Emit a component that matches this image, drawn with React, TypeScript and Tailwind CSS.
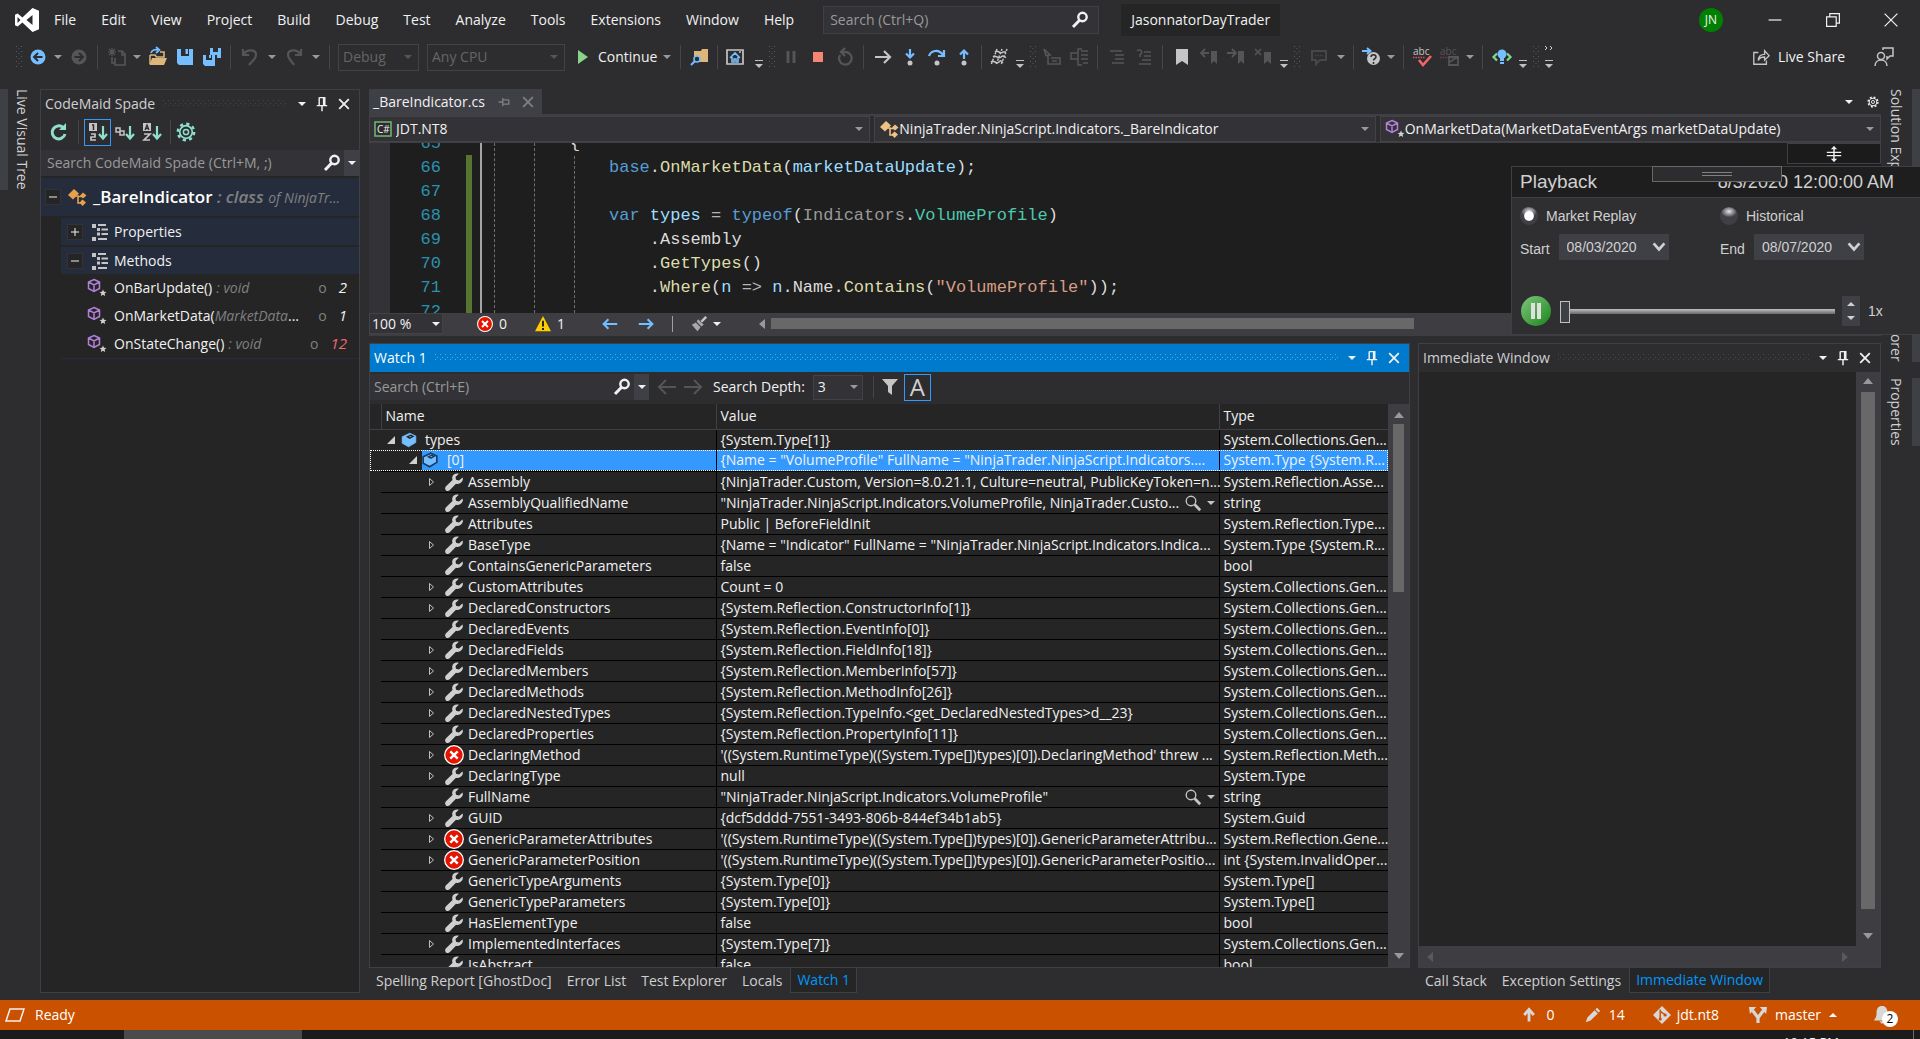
import type { ReactNode } from 'react'

// ---------------------------------------------------------------------------
// Icon primitives
// ---------------------------------------------------------------------------

interface IconProps {
  className?: string
  children?: ReactNode
}

function Icon({ className, children }: IconProps) {
  return (
    <svg viewBox="0 0 20 20" className={`shrink-0 overflow-visible ${className ?? 'size-5'}`} fill="none" aria-hidden="true">
      {children}
    </svg>
  )
}

function Caret({ className }: { className?: string }) {
  return (
    <svg viewBox="0 0 8 4" className={`h-1 w-2 shrink-0 ${className ?? 'text-[#999999]'}`} aria-hidden="true">
      <path d="M0 0h8L4 4z" fill="currentColor" />
    </svg>
  )
}

function SearchIcon({ className }: { className?: string }) {
  return (
    <Icon className={className ?? 'size-5 text-[#f1f1f1]'}>
      <circle cx="12.5" cy="7" r="4.2" stroke="currentColor" strokeWidth="2.4" />
      <path d="M9.5 10.2 3 17" stroke="currentColor" strokeWidth="3" />
    </Icon>
  )
}

function PinIcon() {
  return (
    <Icon className="h-4 w-4">
      <path d="M6.5 2h7v10M6.5 2v10M3.5 12h13M10 12v7M12 2v10" stroke="currentColor" strokeWidth="1.8" />
    </Icon>
  )
}

function CloseIcon() {
  return (
    <Icon className="h-4 w-4">
      <path d="m4 4 12 12M16 4 4 16" stroke="currentColor" strokeWidth="2.2" />
    </Icon>
  )
}

function ClassIcon({ color = '#e8a04c' }: { color?: string }) {
  return (
    <Icon className="size-5">
      <path d="m1 8 6-6 5 4.500-6 6z" fill={color} />
      <path d="M8 9h3v7h4M11 9.500h4" stroke={color} strokeWidth="1.600" />
      <path d="m16 5.500 3.500 3-3.500 3-3-3zM15.500 12.500l3.500 3-3.500 3.500-3-3.500z" fill={color} />
    </Icon>
  )
}

function MethodIcon() {
  return (
    <Icon className="size-5">
      <path d="M7 1.500 12.500 4v6.500L7 13.500 1.500 10.500V4zM1.500 4 7 6.800 12.500 4M7 6.800v6.700" stroke="#b180d7" strokeWidth="1.500" />
      <path d="m16 11.500 1 2.300 2.500.2-1.900 1.600.6 2.400-2.200-1.300-2.200 1.300.6-2.400-1.900-1.600 2.500-.2z" fill="#d0d0d0" />
    </Icon>
  )
}

function GroupIcon() {
  return (
    <Icon className="size-5">
      <path d="M2 2h4v4H2zM2 15h4v4H2zM7 6h3v3H7zM7 10.500h3v3H7z" fill="#c5c5c5" />
      <path d="M8 3h8M11.500 7.500H18M11.500 12H18M8 17h9" stroke="#c5c5c5" strokeWidth="1.800" />
    </Icon>
  )
}

function WrenchIcon() {
  return (
    <Icon className="size-5">
      <path
        d="M18.500 5.500 15 8.500 12 7.800 11.500 5 14.800 1.800C12 .8 8.500 2.500 8.200 5.500c-.1 1 .1 1.800.3 2.500L2 14.300C.8 15.700.900 17.500 2 18.400c1.200 1 2.800.8 3.900-.4L12 11.700c3.500 1 6.800-1.600 6.900-4.600z"
        fill="#d0d0d0"
      />
    </Icon>
  )
}

function ErrorIcon({ className }: { className?: string }) {
  return (
    <Icon className={className ?? 'size-5'}>
      <circle cx="10" cy="10" r="9.300" fill="#e51400" stroke="#ffffff" strokeWidth="1.300" />
      <path d="m6.300 6.300 7.400 7.400M13.700 6.300l-7.400 7.400" stroke="#ffffff" strokeWidth="2.400" />
    </Icon>
  )
}

function CubeIcon({ selected }: { selected?: boolean }) {
  return (
    <Icon className="size-4">
      <path
        d="M11 1.500 18.500 5v8L9.500 18.500 1.500 14V6z"
        fill="#75beff"
        stroke={selected ? '#1b3a5c' : '#75beff'}
        strokeWidth={selected ? 2 : 1}
      />
      <path d="m8 6 4-2 3 1.500-4 2.200z" stroke={selected ? '#1b3a5c' : '#252526'} strokeWidth="1.800" />
    </Icon>
  )
}

function GearIcon({ className }: { className?: string }) {
  return (
    <Icon className={className}>
      <circle cx="10" cy="10" r="6.300" stroke="currentColor" strokeWidth="1.700" />
      <circle cx="10" cy="10" r="2.600" stroke="currentColor" strokeWidth="1.500" />
      <circle cx="10" cy="10" r="8.200" stroke="currentColor" strokeWidth="2.400" strokeDasharray="3.200 3.240" />
    </Icon>
  )
}

/** Dotted drag area that fills the rest of a title bar. */
function DragDots({ id, color }: { id: string; color: string }) {
  return (
    <svg className="h-2 min-w-0 flex-1" aria-hidden="true">
      <pattern id={id} width="5" height="5" patternUnits="userSpaceOnUse">
        <rect width="1" height="1" fill={color} />
        <rect x="2" y="3" width="1" height="1" fill={color} />
      </pattern>
      <rect width="100%" height="100%" fill={`url(#${id})`} />
    </svg>
  )
}

// ---------------------------------------------------------------------------
// Menu bar
// ---------------------------------------------------------------------------

const MENUS = ['File', 'Edit', 'View', 'Project', 'Build', 'Debug', 'Test', 'Analyze', 'Tools', 'Extensions', 'Window', 'Help']

function MenuBar() {
  return (
    <header className="flex h-10 shrink-0 items-center">
      <svg viewBox="0 0 24 24" className="ml-[15px] size-6 shrink-0" aria-label="Visual Studio">
        <path
          d="M17.500 0 24 2.800v18.400L17.500 24 7.400 14.600 2.600 18.500 0 17.300V6.700l2.600-1.200 4.800 3.900zM17.500 7l-6 5 6 5zM2.500 9v6l3-3z"
          fill="#ffffff"
          fillRule="evenodd"
        />
      </svg>
      <nav className="ml-[15px] flex gap-[25px]">
        {MENUS.map((name) => (
          <button key={name} type="button" className="whitespace-nowrap">
            {name}
          </button>
        ))}
      </nav>
      <label className="ml-[29px] flex h-7 w-[276px] items-center border border-[#3f3f46] bg-[#333337] pr-2">
        <input
          aria-label="Search"
          placeholder="Search (Ctrl+Q)"
          className="min-w-0 flex-1 bg-transparent px-1.5 outline-none placeholder:text-[#999999]"
        />
        <SearchIcon />
      </label>
      <h1 className="ml-[22px] flex h-8 items-center bg-[#252526] px-2.5">JasonnatorDayTrader</h1>
      <div className="ml-auto flex items-center">
        <span className="mr-[23px] flex size-6 items-center justify-center rounded-full bg-[#008000] text-xs">JN</span>
        <button type="button" aria-label="Minimize" className="flex w-[58px] justify-center">
          <Icon className="size-4">
            <path d="M2 10h16" stroke="#f1f1f1" strokeWidth="1.500" />
          </Icon>
        </button>
        <button type="button" aria-label="Restore" className="flex w-[58px] justify-center">
          <Icon className="size-4">
            <path d="M2 6h12v12H2zM6 6V2h12v12h-4" stroke="#f1f1f1" strokeWidth="1.500" />
          </Icon>
        </button>
        <button type="button" aria-label="Close" className="flex w-[58px] justify-center">
          <Icon className="size-4">
            <path d="m2 2 16 16M18 2 2 18" stroke="#f1f1f1" strokeWidth="1.500" />
          </Icon>
        </button>
      </div>
    </header>
  )
}

// ---------------------------------------------------------------------------
// Toolbar
// ---------------------------------------------------------------------------

function Tool({ label, children }: { label: string; children: ReactNode }) {
  return (
    <button type="button" aria-label={label} className="flex w-[27px] shrink-0 items-center justify-center">
      <Icon className="size-5">{children}</Icon>
    </button>
  )
}

function Sep({ tight }: { tight?: boolean }) {
  return (
    <span className={`flex shrink-0 justify-center ${tight ? 'w-2' : 'w-[11px]'}`}>
      <span className="h-6 w-px bg-[#46464a]" />
    </span>
  )
}

function Grip() {
  return (
    <svg className="h-6 w-2.5 shrink-0" viewBox="0 0 10 24" aria-hidden="true">
      <path d="M2.500 1v23M7.500 1v23" stroke="#5a5a5e" strokeWidth="1" strokeDasharray="1 4" />
      <path d="M5 3v20" stroke="#5a5a5e" strokeWidth="1" strokeDasharray="1 4" />
    </svg>
  )
}

function DropCaret({ wide }: { wide?: boolean }) {
  return (
    <button type="button" aria-label="More options" className={`flex shrink-0 justify-center ${wide ? 'w-[17px]' : 'w-3.5'}`}>
      <Caret />
    </button>
  )
}

function Overflow({ chevrons }: { chevrons?: boolean }) {
  return (
    <button type="button" aria-label="Toolbar options" className="flex w-4 shrink-0 justify-center">
      <svg viewBox="0 0 10 24" className="h-6 w-2.5" aria-hidden="true">
        {chevrons && <path d="m1 1 2 2-2 2M6 1l2 2-2 2" stroke="#d0d0d0" fill="none" />}
        <path d="M1 15.500h8" stroke="#c0c0c0" strokeWidth="1" />
        <path d="M1 19h8l-4 4z" fill="#c0c0c0" />
      </svg>
    </button>
  )
}

function Combo({ label, value, className }: { label: string; value: string; className: string }) {
  return (
    <span className={`flex h-[27px] shrink-0 items-center border border-[#434346] pr-1.5 ${className}`}>
      <select aria-label={label} className="min-w-0 flex-1 appearance-none bg-transparent pl-1 text-[#656565] outline-none">
        <option>{value}</option>
      </select>
      <Caret className="text-[#555558]" />
    </span>
  )
}

const DIM = '#555558'
const LIGHT = '#c5c5c5'
const BLUE = '#75beff'

function Toolbar() {
  return (
    <div className="flex h-[34px] shrink-0 items-center pl-3.5">
      <Grip />
      <Tool label="Navigate backward">
        <circle cx="10" cy="10" r="7.500" fill={BLUE} />
        <path d="M14.500 10H6.500M10 6l-4 4 4 4" stroke="#2d2d30" strokeWidth="2" />
      </Tool>
      <DropCaret />
      <Tool label="Navigate forward">
        <circle cx="10" cy="10" r="7.500" fill={DIM} />
        <path d="M5.500 10h8M10 6l4 4-4 4" stroke="#2d2d30" strokeWidth="2" />
      </Tool>
      <Sep />
      <Tool label="New project">
        <path d="M5 1v8M1 5h8M2 2l6 6M8 2 2 8" stroke={DIM} strokeWidth="1.200" />
        <path d="M11 4h4l3 3v11H8v-7M15 4v4h3M5 10v6h3" stroke={DIM} strokeWidth="1.600" />
      </Tool>
      <DropCaret />
      <Tool label="Open file">
        <path d="M2 8h5l1.500 2H16v-5h-4" stroke="#dcb67a" strokeWidth="1.600" />
        <path d="M4 11h15l-3 7H1.500z" fill="#dcb67a" />
        <path d="M2 8v9" stroke="#dcb67a" strokeWidth="1.500" />
        <path d="M3 6c1-3 4-4 7-3M8 0l3.500 3L8 6" stroke={BLUE} strokeWidth="1.700" />
      </Tool>
      <Tool label="Save">
        <path d="M2 2h16v16H4l-2-2z" fill={BLUE} />
        <path d="M6 2h8v7H6z" fill="#2d2d30" />
        <path d="M10.500 2h2.500v5h-2.500z" fill={BLUE} />
      </Tool>
      <Tool label="Save all">
        <path d="M8 1h11v10h-4V8H8z" fill={BLUE} />
        <path d="M11 1h5v4h-5z" fill="#2d2d30" />
        <path d="M1 8h12v11H3l-2-2z" fill={BLUE} />
        <path d="M4 8h6v5H4z" fill="#2d2d30" />
        <path d="M7 8h2v3H7z" fill={BLUE} />
      </Tool>
      <Sep />
      <Tool label="Undo">
        <path d="M3 2v6h6M4 7c3-5 12-5 12 1 0 4-4 6-7 10" stroke={DIM} strokeWidth="2.200" />
      </Tool>
      <DropCaret wide />
      <Tool label="Redo">
        <path d="M17 2v6h-6M16 7C13 2 4 2 4 8c0 4 4 6 6 10" stroke={DIM} strokeWidth="2.200" />
      </Tool>
      <DropCaret wide />
      <Sep />
      <Combo label="Solution configuration" value="Debug" className="ml-[3px] w-[81px]" />
      <Combo label="Solution platform" value="Any CPU" className="ml-2 w-[138px]" />
      <button type="button" className="flex w-[110px] shrink-0 items-center pl-[13px]">
        <svg viewBox="0 0 10 14" className="mr-2.5 h-3.5 w-2.5 shrink-0" aria-hidden="true">
          <path d="M0 0v14l10-7z" fill="#8ad488" />
        </svg>
        Continue
        <Caret className="ml-1.5 text-[#999999]" />
      </button>
      <Sep />
      <Tool label="Find in files">
        <path d="M4 4h7l1-2h6v13H9" fill="#dcb67a" />
        <path d="M4 4v6l7 5V4z" fill="#dcb67a" />
        <circle cx="7" cy="12" r="3" fill="#2d2d30" stroke={BLUE} strokeWidth="1.600" />
        <path d="m5 14-4 4" stroke={BLUE} strokeWidth="2" />
      </Tool>
      <Sep tight />
      <Tool label="Start page">
        <path d="M2 3h16v14H2z" stroke={LIGHT} strokeWidth="1.700" />
        <path d="m5 11 5-5 5 5M7 10v5h2v-3h2v3h2v-5" stroke={BLUE} strokeWidth="1.600" />
        <path d="M14 5h2" stroke={LIGHT} strokeWidth="1.500" />
      </Tool>
      <span className="w-[3px] shrink-0" />
      <Overflow />
      <Grip />
      <Tool label="Break all">
        <path d="M5.500 4h3v12h-3zM11.500 4h3v12h-3z" fill={DIM} />
      </Tool>
      <Tool label="Stop debugging">
        <path d="M5 5h10v10H5z" fill="#f48771" />
      </Tool>
      <Tool label="Restart">
        <path d="M5 8a6.300 6.300 0 1 0 5-3H7M10 1 6 5l4 4" stroke={DIM} strokeWidth="2.300" />
      </Tool>
      <Sep />
      <Tool label="Show next statement">
        <path d="M2 10h15M11 4l6 6-6 6" stroke={LIGHT} strokeWidth="2.200" />
      </Tool>
      <Tool label="Step into">
        <path d="M10 2v8M6 6.500l4 4 4-4" stroke={BLUE} strokeWidth="2.200" />
        <circle cx="10" cy="16" r="2.500" fill={LIGHT} />
      </Tool>
      <Tool label="Step over">
        <path d="M2 9C4 3 12 2 16 8M17 3v6h-6" stroke={BLUE} strokeWidth="2.200" />
        <circle cx="10" cy="16" r="2.500" fill={LIGHT} />
      </Tool>
      <Tool label="Step out">
        <path d="M10 12V4M6 7.500l4-4 4 4" stroke={BLUE} strokeWidth="2.200" />
        <circle cx="10" cy="16" r="2.500" fill={LIGHT} />
      </Tool>
      <Sep tight />
      <Tool label="Show threads in source">
        <path d="m8 2-6 16M13 2 7 18M18 2l-6 16" stroke={LIGHT} strokeWidth="1.500" strokeDasharray="2 1.500" />
        <path d="M6 5c3-3 5 3 8 0h3M4 10c3-3 5 3 8 0s4 1 5 0M2 15c3-3 5 3 8 0s3 1 4 0" stroke={LIGHT} strokeWidth="1.500" />
      </Tool>
      <Overflow />
      <Grip />
      <Tool label="Display members">
        <path d="m2 2 6 6-4 .5zM6 9v8h12v-6H9M10 14h5" stroke={DIM} strokeWidth="1.600" />
      </Tool>
      <Tool label="Parameter info">
        <path d="M2 6h7v6H2zM13 2H9v16h4M12 4h7M12 8h7M12 12h7M14 16h5" stroke={DIM} strokeWidth="1.500" />
      </Tool>
      <Sep />
      <Tool label="Comment lines">
        <path d="M3 4h12M8 8h9M8 12h9M5 16h12" stroke={DIM} strokeWidth="1.600" />
      </Tool>
      <Tool label="Uncomment lines">
        <path d="M3 4c3-3 7 1 3 4v2M10 5h7M10 9h7M8 13h9M5 17h12" stroke={DIM} strokeWidth="1.600" />
      </Tool>
      <Sep />
      <Tool label="Toggle bookmark">
        <path d="M4 2h12v16l-6-4-6 4z" fill={LIGHT} />
      </Tool>
      <Tool label="Previous bookmark">
        <path d="M12 4h6v13l-3-3-3 3z" fill={DIM} />
        <path d="M10 6H3M6 2 2 6l4 4" stroke={DIM} strokeWidth="1.800" />
      </Tool>
      <Tool label="Next bookmark">
        <path d="M12 4h6v13l-3-3-3 3z" fill={DIM} />
        <path d="M1 6h8M6 2l4 4-4 4" stroke={DIM} strokeWidth="1.800" />
      </Tool>
      <Tool label="Clear bookmarks">
        <path d="M11 5h7v12l-3.500-3-3.500 3z" fill={DIM} />
        <path d="m2 2 6 6M8 2 2 8" stroke={DIM} strokeWidth="1.600" />
      </Tool>
      <Overflow />
      <Grip />
      <span className="w-[3px] shrink-0" />
      <Tool label="Feedback comment">
        <path d="M3 4h14v9h-6l-4 4v-4H3z" stroke="#47474a" strokeWidth="2" />
        <path d="M6 8.500h8" stroke="#47474a" strokeWidth="1.500" strokeDasharray="1.500 1" />
      </Tool>
      <DropCaret wide />
      <Sep tight />
      <Tool label="Help document">
        <path d="M1 4h8M6 1l3.500 3L6 7" stroke={BLUE} strokeWidth="2" />
        <circle cx="12.500" cy="11.500" r="6.500" fill={LIGHT} />
        <path d="M10 10c0-3 5-3 5 0 0 2-2.500 1.500-2.500 3.500M12.500 15v2" stroke="#2d2d30" strokeWidth="1.500" />
      </Tool>
      <DropCaret />
      <Sep />
      <Tool label="Spell check">
        <text x="0" y="8" fontSize="10" fill={LIGHT}>
          abc
        </text>
        <path d="M0 10.500h12" stroke="#e0525a" strokeWidth="1.500" strokeDasharray="1.500 1" />
        <path d="m6 13 4 5 8-9" stroke="#f0666a" strokeWidth="2.600" />
      </Tool>
      <Tool label="Spell check options">
        <text x="0" y="8" fontSize="10" fill={DIM}>
          abc
        </text>
        <path d="M0 10.500h12" stroke="#6d4044" strokeWidth="1.500" strokeDasharray="1.500 1" />
        <path d="M9 10h9v8H9zM10 15l7-5" stroke={DIM} strokeWidth="1.800" />
      </Tool>
      <DropCaret />
      <Sep />
      <Tool label="Code suggestions">
        <path d="M5 6.500 1.500 10 5 13.500M15 6.500l3.500 3.500-3.500 3.500" stroke="#7fd88f" strokeWidth="2.200" />
        <circle cx="10" cy="7" r="4.500" fill={BLUE} />
        <path d="M8 10h4v4H8zM8 15h4v2H8z" fill={BLUE} />
      </Tool>
      <Overflow />
      <Grip />
      <Overflow chevrons />
      <button type="button" className="mr-[29px] ml-auto flex shrink-0 items-center gap-2">
        <Icon className="size-[18px]">
          <path d="M7 5H2v13h14v-4M7 14c0-5 3-7 7-7V3l5 5.500-5 5V10c-4 0-6 1-7 4z" stroke={LIGHT} strokeWidth="1.500" />
        </Icon>
        Live Share
      </button>
      <button type="button" aria-label="Send feedback" className="mr-[26px] shrink-0">
        <Icon className="size-5">
          <circle cx="7" cy="9" r="3.500" stroke={LIGHT} strokeWidth="1.500" />
          <path d="M1 19c0-8 12-8 12 0M9 3V1h10v8h-3l-3 3V9" stroke={LIGHT} strokeWidth="1.500" />
        </Icon>
      </button>
    </div>
  )
}

// ---------------------------------------------------------------------------
// Tool window title bar and bottom tabs
// ---------------------------------------------------------------------------

function TitleBar({ id, title, active }: { id: string; title: string; active?: boolean }) {
  return (
    <div
      className={`flex h-7 shrink-0 items-center gap-2 pr-[7px] pl-1 ${active ? 'bg-[#007acc] text-white' : 'text-[#d0d0d0]'}`}
    >
      <h2 className="whitespace-nowrap">{title}</h2>
      <DragDots id={id} color={active ? '#59a8de' : '#46464a'} />
      <div className="flex items-center gap-1.5 text-[#f1f1f1]">
        <button type="button" aria-label="Window position" className="px-0.5">
          <Caret className="text-[#f1f1f1]" />
        </button>
        <button type="button" aria-label="Auto hide">
          <PinIcon />
        </button>
        <button type="button" aria-label="Close">
          <CloseIcon />
        </button>
      </div>
    </div>
  )
}

function BottomTabs({ tabs, current }: { tabs: string[]; current: string }) {
  return (
    <div className="flex h-[25px] shrink-0 gap-px text-[#d0d0d0]">
      {tabs.map((tab) => (
        <button
          key={tab}
          type="button"
          className={`px-1.5 whitespace-nowrap ${
            tab === current ? 'border border-t-0 border-[#3f3f46] bg-[#252526] text-[#0097fb]' : 'border border-transparent'
          }`}
        >
          {tab}
        </button>
      ))}
    </div>
  )
}

function ScrollArrow({ dir, className }: { dir: 'up' | 'down' | 'left' | 'right'; className?: string }) {
  const paths = { up: 'M0 8h10L5 2z', down: 'M0 2h10L5 8z', left: 'M8 0v10L2 5z', right: 'M2 0v10l6-5z' }
  return (
    <svg viewBox="0 0 10 10" className={`size-2.5 shrink-0 ${className ?? 'text-[#999999]'}`} aria-hidden="true">
      <path d={paths[dir]} fill="currentColor" />
    </svg>
  )
}

// ---------------------------------------------------------------------------
// CodeMaid Spade
// ---------------------------------------------------------------------------

function TreeToggle({ open }: { open: boolean }) {
  return (
    <button
      type="button"
      aria-label={open ? 'Collapse' : 'Expand'}
      className="flex size-4 shrink-0 items-center justify-center border border-[#333337] bg-[#252526]"
    >
      <Icon className="size-2">
        <path d={open ? 'M0 10h20' : 'M0 10h20M10 0v20'} stroke="#f1f1f1" strokeWidth="2.500" />
      </Icon>
    </button>
  )
}

const METHODS = [
  { name: 'OnBarUpdate()', args: '', type: ': void', score: 2 },
  { name: 'OnMarketData(', args: 'MarketData', type: '', score: 1 },
  { name: 'OnStateChange()', args: '', type: ': void', score: 12 },
]

function SpadePanel() {
  return (
    <section className="flex w-80 shrink-0 flex-col border border-[#3f3f46] bg-[#252526]">
      <div className="bg-[#2d2d30]">
        <TitleBar id="spade-dots" title="CodeMaid Spade" />
        <div className="flex h-8 items-center pb-1 pl-1 text-[#8ee0cc]">
          <button type="button" aria-label="Refresh" className="flex w-7 justify-center">
            <Icon className="size-5">
              <path d="M16 12a6.500 6.500 0 1 1-2-6.500" stroke="currentColor" strokeWidth="3" />
              <path d="M17 1v7h-7z" fill="currentColor" />
            </Icon>
          </button>
          <Sep />
          <button type="button" aria-label="Sort by file order" className="flex size-[27px] items-center justify-center border border-[#3399ff]">
            <Icon className="size-5">
              <path d="M1 1h8v8H1z" fill={LIGHT} />
              <path d="M4 3h1.500v5" stroke="#2d2d30" strokeWidth="1.500" />
              <path d="M3 12h4v3H3v3h5" stroke={LIGHT} strokeWidth="1.700" />
              <path d="M15 4v12M11 12l4 4.500 4-4.500" stroke="currentColor" strokeWidth="2.200" />
            </Icon>
          </button>
          <button type="button" aria-label="Sort by type" className="flex w-[27px] justify-center">
            <Icon className="size-5">
              <path d="M1 6h4v4H1zM5 9h4v4H5z" stroke={LIGHT} strokeWidth="1.500" />
              <path d="M15 4v12M11 12l4 4.500 4-4.500" stroke="currentColor" strokeWidth="2.200" />
            </Icon>
          </button>
          <button type="button" aria-label="Sort by name" className="flex w-[27px] justify-center">
            <Icon className="size-5">
              <path d="M1 1h8v8H1z" fill={LIGHT} />
              <path d="m3 8 2-5 2 5M3.500 6.500h3" stroke="#2d2d30" strokeWidth="1.300" />
              <path d="M2 12h6l-6 6h6" stroke={LIGHT} strokeWidth="1.700" />
              <path d="M15 4v12M11 12l4 4.500 4-4.500" stroke="currentColor" strokeWidth="2.200" />
            </Icon>
          </button>
          <Sep />
          <button type="button" aria-label="Options">
            <GearIcon className="size-5" />
          </button>
        </div>
      </div>
      <label className="flex h-[26px] shrink-0 items-center bg-[#333337]">
        <input
          aria-label="Search CodeMaid Spade"
          placeholder="Search CodeMaid Spade (Ctrl+M, ;)"
          className="min-w-0 flex-1 bg-transparent pl-1.5 outline-none placeholder:text-[#999999]"
        />
        <SearchIcon />
        <span className="ml-0.5 flex h-full w-[15px] items-center justify-center bg-[#3f3f46]">
          <Caret className="text-[#f1f1f1]" />
        </span>
      </label>

      {/* Class node and its groups */}
      <div className="mt-0.5 flex h-[38px] items-center bg-[#252d3d] pl-1">
        <TreeToggle open />
        <span className="ml-1.5">
          <ClassIcon />
        </span>
        <p className="ml-1.5 whitespace-nowrap text-[#808080]">
          <b className="text-[17px] font-semibold text-white">_BareIndicator</b>
          <b className="text-[17px] font-semibold italic"> : class </b>
          <i>of NinjaTr...</i>
        </p>
      </div>
      {['Properties', 'Methods'].map((group) => (
        <div key={group} className="mt-0.5 ml-5 flex h-[27px] items-center bg-[#252d3d] pl-1.5">
          <TreeToggle open={group === 'Methods'} />
          <span className="mr-1 ml-[7px]">
            <GroupIcon />
          </span>
          {group}
        </div>
      ))}
      <ul className="ml-5 border-b border-[#252d3d]">
        {METHODS.map(({ name, args, type, score }) => (
          <li key={name} className="flex h-[28px] items-center pr-3 pl-[26px]">
            <MethodIcon />
            <span className="ml-[7px]">{name}</span>
            {args && (
              <span>
                <i className="text-[#808080]">{args}</i>...
              </span>
            )}
            <i className="ml-1 text-[#808080]">{type}</i>
            <span className="ml-auto text-[#808080]">o</span>
            <i className={`ml-3 text-[15px] ${score > 10 ? 'text-[#f06a6a]' : 'text-[#f1f1f1]'}`}>{score}</i>
          </li>
        ))}
      </ul>
    </section>
  )
}

// ---------------------------------------------------------------------------
// Code editor
// ---------------------------------------------------------------------------

const LINE_NUMBERS = [65, 66, 67, 68, 69, 70, 71, 72]

function NavSelect({ label, value, icon }: { label: string; value: string; icon: ReactNode }) {
  return (
    <span className="flex h-[26px] min-w-0 flex-1 items-center border border-[#434346] bg-[#333337] pr-1.5 pl-1">
      {icon}
      <select aria-label={label} className="min-w-0 flex-1 appearance-none bg-transparent outline-none">
        <option>{value}</option>
      </select>
      <Caret />
    </span>
  )
}

function CodeArea() {
  return (
    <div className="flex h-[170px] overflow-hidden bg-[#1e1e1e] font-['Liberation_Mono',monospace] text-[17px]/6 text-[#dcdcdc]">
      <div className="w-[21px] shrink-0 bg-[#333337]" />
      <div className="-mt-[11px] w-[76px] shrink-0 pr-[25px] text-right text-[#2b91af]">
        {LINE_NUMBERS.map((n) => (
          <div key={n}>{n}</div>
        ))}
      </div>
      <div className="mt-3 w-1.5 shrink-0 bg-[#577430]" />
      <div className="ml-2 w-0.5 shrink-0 bg-[#a5a5a5]" />
      <div className="ml-3 w-10 shrink-0 border-l border-dashed border-[#707070]" />
      <div className="w-9 shrink-0 border-l border-dashed border-[#707070]" />
      <div className="-mt-[11px] flex w-[39px] shrink-0 flex-col">
        <span>{'{'}</span>
        <span className="ml-1 flex-1 border-l border-dashed border-[#707070]" />
      </div>
      <pre className="-mt-[11px] min-w-0 font-[inherit]">
        {'\n'}
        <span className="text-[#569cd6]">base</span>.<span className="text-[#dcdcaa]">OnMarketData</span>(
        <span className="text-[#9cdcfe]">marketDataUpdate</span>);{'\n\n'}
        <span className="text-[#569cd6]">var</span> <span className="text-[#9cdcfe]">types</span>
        <span className="text-[#b4b4b4]"> = </span>
        <span className="text-[#569cd6]">typeof</span>(<span className="text-[#999999]">Indicators</span>.
        <span className="text-[#4ec9b0]">VolumeProfile</span>){'\n    '}.Assembly{'\n    '}.
        <span className="text-[#dcdcaa]">GetTypes</span>(){'\n    '}.<span className="text-[#dcdcaa]">Where</span>(
        <span className="text-[#9cdcfe]">n</span>
        <span className="text-[#b4b4b4]">{' => '}</span>
        <span className="text-[#9cdcfe]">n</span>.Name.<span className="text-[#dcdcaa]">Contains</span>(
        <span className="text-[#d69d85]">"VolumeProfile"</span>));
      </pre>
      {/* Split handle */}
      <button
        type="button"
        aria-label="Split editor"
        className="ml-auto flex h-[21px] w-[94px] shrink-0 items-center justify-center border border-[#3f3f46] bg-[#1b1b1c]"
      >
        <Icon className="size-4">
          <path d="M1 8h18M1 12h18M10 1v18" stroke="#f1f1f1" strokeWidth="1.800" />
          <path d="m6 4 4-4 4 4zM6 16l4 4 4-4z" fill="#f1f1f1" />
        </Icon>
      </button>
    </div>
  )
}

function Editor() {
  return (
    <section className="flex shrink-0 flex-col">
      <div className="flex h-[25px] items-center">
        <div className="flex h-full w-[173px] items-center bg-[#3f3f46] pl-1">
          _BareIndicator.cs
          <button type="button" aria-label="Pin tab" className="ml-auto rotate-90 text-[#808080]">
            <Icon className="size-3">
              <path d="M6.500 2h7v10M6.500 2v10M3.500 12h13M10 12v7" stroke="currentColor" strokeWidth="2.200" />
            </Icon>
          </button>
          <button type="button" aria-label="Close tab" className="mr-1.5 ml-2.5 text-[#808080]">
            <CloseIcon />
          </button>
        </div>
        <button type="button" aria-label="Active files" className="mr-3.5 ml-auto">
          <Caret className="text-[#f1f1f1]" />
        </button>
        <button type="button" aria-label="Tab options" className="mr-0.5">
          <GearIcon className="size-3" />
        </button>
      </div>
      <div className="flex gap-1 border-t-2 border-b border-[#3f3f46]">
        <NavSelect
          label="Project"
          value="JDT.NT8"
          icon={
            <svg viewBox="0 0 18 16" className="mr-1 h-4 w-[18px] shrink-0" aria-hidden="true">
              <path d="M1 1h16v14H1z" fill="#2d2d30" stroke="#73b873" strokeWidth="1.500" />
              <text x="3" y="12" fontSize="10" fill="#f1f1f1">
                C#
              </text>
            </svg>
          }
        />
        <NavSelect label="Type" value="NinjaTrader.NinjaScript.Indicators._BareIndicator" icon={<ClassIcon color="#efc184" />} />
        <NavSelect label="Member" value="OnMarketData(MarketDataEventArgs marketDataUpdate)" icon={<MethodIcon />} />
      </div>
      <CodeArea />
      <div className="flex h-[23px] items-center bg-[#3e3e42] pb-0.5">
        <span className="flex h-[21px] w-[74px] shrink-0 items-center border border-[#434346] bg-[#333337] pr-0.5">
          <select aria-label="Zoom" className="min-w-0 flex-1 appearance-none bg-transparent pl-0.5 outline-none">
            <option>100 %</option>
          </select>
          <Caret className="text-[#f1f1f1]" />
        </span>
        <button type="button" className="ml-[34px] flex items-center gap-1.5">
          <ErrorIcon className="size-4" />0
        </button>
        <button type="button" className="ml-7 flex items-center gap-1.5">
          <Icon className="size-4">
            <path d="M10 0 20 19H0z" fill="#ffcc00" />
            <path d="M10 6v7M10 15v2.500" stroke="#1e1e1e" strokeWidth="2.400" />
          </Icon>
          1
        </button>
        <button type="button" aria-label="Previous issue" className="ml-[37px]">
          <Icon className="size-4">
            <path d="M19 10H2M8 4l-6 6 6 6" stroke={BLUE} strokeWidth="2.500" />
          </Icon>
        </button>
        <button type="button" aria-label="Next issue" className="ml-5">
          <Icon className="size-4">
            <path d="M1 10h17M12 4l6 6-6 6" stroke={BLUE} strokeWidth="2.500" />
          </Icon>
        </button>
        <span className="mx-[18px] h-4 w-px bg-[#a0a0a0]" />
        <button type="button" aria-label="Code cleanup" className="flex items-center gap-1.5">
          <Icon className="size-4">
            <path d="m19 1-6 6" stroke={LIGHT} strokeWidth="3" />
            <path d="m9 4 7 7-3 2-6-6zM6 8l6 6-4 5-7-8z" fill="#a8a8a8" />
          </Icon>
          <Caret className="text-[#f1f1f1]" />
        </button>
        <ScrollArrow dir="left" className="ml-9 text-[#999999]" />
        <div className="ml-1 flex flex-1 items-center pr-[2px]">
          <div className="h-[11px] w-[58%] bg-[#686868]" />
        </div>
      </div>
    </section>
  )
}

// ---------------------------------------------------------------------------
// Watch window
// ---------------------------------------------------------------------------

interface WatchRow {
  name: string
  value: string
  type: string
  expandable?: boolean
  error?: boolean
  text?: boolean
}

const GEN = 'System.Collections.Gen...'

const ROWS: WatchRow[] = [
  { name: 'Assembly', value: '{NinjaTrader.Custom, Version=8.0.21.1, Culture=neutral, PublicKeyToken=n...', type: 'System.Reflection.Asse...', expandable: true },
  { name: 'AssemblyQualifiedName', value: '"NinjaTrader.NinjaScript.Indicators.VolumeProfile, NinjaTrader.Custo...', type: 'string', text: true },
  { name: 'Attributes', value: 'Public | BeforeFieldInit', type: 'System.Reflection.Type...' },
  { name: 'BaseType', value: '{Name = "Indicator" FullName = "NinjaTrader.NinjaScript.Indicators.Indica...', type: 'System.Type {System.R...', expandable: true },
  { name: 'ContainsGenericParameters', value: 'false', type: 'bool' },
  { name: 'CustomAttributes', value: 'Count = 0', type: GEN, expandable: true },
  { name: 'DeclaredConstructors', value: '{System.Reflection.ConstructorInfo[1]}', type: GEN, expandable: true },
  { name: 'DeclaredEvents', value: '{System.Reflection.EventInfo[0]}', type: GEN },
  { name: 'DeclaredFields', value: '{System.Reflection.FieldInfo[18]}', type: GEN, expandable: true },
  { name: 'DeclaredMembers', value: '{System.Reflection.MemberInfo[57]}', type: GEN, expandable: true },
  { name: 'DeclaredMethods', value: '{System.Reflection.MethodInfo[26]}', type: GEN, expandable: true },
  { name: 'DeclaredNestedTypes', value: '{System.Reflection.TypeInfo.<get_DeclaredNestedTypes>d__23}', type: GEN, expandable: true },
  { name: 'DeclaredProperties', value: '{System.Reflection.PropertyInfo[11]}', type: GEN, expandable: true },
  { name: 'DeclaringMethod', value: "'((System.RuntimeType)((System.Type[])types)[0]).DeclaringMethod' threw ...", type: 'System.Reflection.Meth...', expandable: true, error: true },
  { name: 'DeclaringType', value: 'null', type: 'System.Type', expandable: true },
  { name: 'FullName', value: '"NinjaTrader.NinjaScript.Indicators.VolumeProfile"', type: 'string', text: true },
  { name: 'GUID', value: '{dcf5dddd-7551-3493-806b-844ef34b1ab5}', type: 'System.Guid', expandable: true },
  { name: 'GenericParameterAttributes', value: "'((System.RuntimeType)((System.Type[])types)[0]).GenericParameterAttribu...", type: 'System.Reflection.Gene...', expandable: true, error: true },
  { name: 'GenericParameterPosition', value: "'((System.RuntimeType)((System.Type[])types)[0]).GenericParameterPositio...", type: 'int {System.InvalidOper...', expandable: true, error: true },
  { name: 'GenericTypeArguments', value: '{System.Type[0]}', type: 'System.Type[]' },
  { name: 'GenericTypeParameters', value: '{System.Type[0]}', type: 'System.Type[]' },
  { name: 'HasElementType', value: 'false', type: 'bool' },
  { name: 'ImplementedInterfaces', value: '{System.Type[7]}', type: GEN, expandable: true },
  { name: 'IsAbstract', value: 'false', type: 'bool' },
]

function Expander({ open, className }: { open?: boolean; className: string }) {
  return (
    <button type="button" aria-label={open ? 'Collapse' : 'Expand'} className={className}>
      <svg viewBox="0 0 8 10" className="h-2.5 w-2" fill="none" aria-hidden="true">
        {open ? <path d="M8 1v8H0z" fill="#d0d0d0" /> : <path d="M1.500 1.500v7L5.500 5z" stroke="#c0c0c0" />}
      </svg>
    </button>
  )
}

function WatchTable() {
  return (
    <table className="w-full table-fixed border-collapse whitespace-nowrap">
      <colgroup>
        <col className="w-[11px]" />
        <col className="w-[335px]" />
        <col />
        <col className="w-[169px]" />
      </colgroup>
      <thead>
        <tr className="h-[25px] border-b border-[#3f3f46] text-left">
          <th className="border-r border-[#3f3f46]" />
          <th className="border-r border-[#3f3f46] pl-1 font-normal">Name</th>
          <th className="border-r border-[#3f3f46] pl-1 font-normal">Value</th>
          <th className="pl-1 font-normal">Type</th>
        </tr>
      </thead>
      <tbody>
        <tr className="h-[21px]">
          <td />
          <td className="border-r border-black p-0">
            <div className="flex h-5 items-center">
              <Expander open className="ml-1.5" />
              <span className="mr-2 ml-1.5">
                <CubeIcon />
              </span>
              types
            </div>
          </td>
          <td className="border-r border-black py-0 pr-0 pl-1">{'{System.Type[1]}'}</td>
          <td className="py-0 pr-0 pl-1">{GEN}</td>
        </tr>
        <tr className="h-[21px] outline outline-1 -outline-offset-1 outline-dotted outline-white">
          <td />
          <td className="border-r border-black p-0">
            <div className="flex h-5 items-center">
              <Expander open className="ml-7" />
              <div className="ml-[5px] flex h-full flex-1 items-center gap-[9px] bg-[#3399ff]">
                <CubeIcon selected />
                [0]
              </div>
            </div>
          </td>
          <td className="border-r border-black bg-[#3399ff] py-0 pr-0 pl-1">
            {'{Name = "VolumeProfile" FullName = "NinjaTrader.NinjaScript.Indicators....'}
          </td>
          <td className="bg-[#3399ff] py-0 pr-0 pl-1">{'System.Type {System.R...'}</td>
        </tr>
        {ROWS.map(({ name, value, type, expandable, error, text }) => (
          <tr key={name} className="h-[21px]">
            <td />
            <td className="border-t border-r border-black p-0">
              <div className="flex h-5 items-center pl-[47px]">
                <span className="w-4">{expandable && <Expander className="block" />}</span>
                {error ? <ErrorIcon /> : <WrenchIcon />}
                <span className="ml-1">{name}</span>
              </div>
            </td>
            <td className="border-t border-r border-black py-0 pr-0 pl-1">
              <div className="flex h-5 items-center">
                <span className="min-w-0 flex-1">{value}</span>
                {text && (
                  <button type="button" aria-label="Text visualizer" className="mr-1 flex items-center gap-1.5">
                    <Icon className="size-4">
                      <circle cx="7.500" cy="7.500" r="6" stroke={LIGHT} strokeWidth="1.700" />
                      <path d="m12 12 7 7" stroke={LIGHT} strokeWidth="3.500" />
                    </Icon>
                    <Caret className="text-[#c5c5c5]" />
                  </button>
                )}
              </div>
            </td>
            <td className="border-t border-black py-0 pr-0 pl-1">{type}</td>
          </tr>
        ))}
      </tbody>
    </table>
  )
}

function WatchWindow() {
  return (
    <section className="flex min-w-0 flex-1 flex-col">
      <div className="flex min-h-0 flex-1 flex-col border border-[#3f3f46]">
        <TitleBar id="watch-dots" title="Watch 1" active />
        <div className="flex h-8 shrink-0 items-center pb-0.5">
          <label className="flex h-[26px] w-[279px] items-center bg-[#333337]">
            <input
              aria-label="Search watch"
              placeholder="Search (Ctrl+E)"
              className="min-w-0 flex-1 bg-transparent pl-1 outline-none placeholder:text-[#999999]"
            />
            <SearchIcon />
            <span className="ml-0.5 flex h-full w-[15px] items-center justify-center bg-[#3f3f46]">
              <Caret className="text-[#f1f1f1]" />
            </span>
          </label>
          <button type="button" aria-label="Find previous" className="ml-2">
            <Icon>
              <path d="M19 10H2M9 3l-7 7 7 7" stroke={DIM} strokeWidth="2" />
            </Icon>
          </button>
          <button type="button" aria-label="Find next" className="ml-1.5">
            <Icon>
              <path d="M1 10h17M11 3l7 7-7 7" stroke={DIM} strokeWidth="2" />
            </Icon>
          </button>
          <label htmlFor="depth" className="ml-2.5">
            Search Depth:
          </label>
          <span className="ml-2 flex h-[25px] w-[50px] items-center border border-[#434346] bg-[#333337] pr-1">
            <select id="depth" className="min-w-0 flex-1 appearance-none bg-transparent pl-1 outline-none">
              <option>3</option>
            </select>
            <Caret />
          </span>
          <span className="ml-2.5 h-[22px] w-px bg-[#46464a]" />
          <button type="button" aria-label="Filter" className="ml-1.5">
            <Icon>
              <path d="M2 2h16l-6 7v9l-4-3V9z" fill={LIGHT} />
            </Icon>
          </button>
          <button
            type="button"
            aria-label="Match case"
            className="ml-1 flex h-[27px] w-[27px] items-center justify-center border border-[#3399ff] text-2xl/6 text-[#d0d0d0]"
          >
            A
          </button>
        </div>
        <div className="flex min-h-0 flex-1 bg-[#252526]">
          <div className="min-w-0 flex-1 overflow-hidden">
            <WatchTable />
          </div>
          <div className="flex w-[21px] shrink-0 flex-col items-center bg-[#3e3e42] py-1.5">
            <ScrollArrow dir="up" />
            <div className="mt-1 h-[168px] w-[11px] bg-[#686868]" />
            <ScrollArrow dir="down" className="mt-auto text-[#999999]" />
          </div>
        </div>
      </div>
      <BottomTabs tabs={['Spelling Report [GhostDoc]', 'Error List', 'Test Explorer', 'Locals', 'Watch 1']} current="Watch 1" />
    </section>
  )
}

// ---------------------------------------------------------------------------
// Immediate window
// ---------------------------------------------------------------------------

function ImmediateWindow() {
  return (
    <section className="flex w-[463px] shrink-0 flex-col">
      <div className="flex min-h-0 flex-1 flex-col border border-[#3f3f46]">
        <TitleBar id="immediate-dots" title="Immediate Window" />
        <div className="flex min-h-0 flex-1 bg-[#3e3e42]">
          <div className="flex min-w-0 flex-1 flex-col">
            <textarea aria-label="Immediate Window" className="min-h-0 flex-1 resize-none bg-[#252526] outline-none" />
            <div className="flex h-[21px] items-center justify-between px-1.5">
              <ScrollArrow dir="left" className="text-[#5a5a5e]" />
              <ScrollArrow dir="right" className="text-[#5a5a5e]" />
            </div>
          </div>
          <div className="flex w-6 shrink-0 flex-col items-center pt-1 pb-[26px]">
            <ScrollArrow dir="up" />
            <div className="my-1.5 w-3.5 flex-1 bg-[#686868]" />
            <span className="mt-4 flex">
              <ScrollArrow dir="down" />
            </span>
          </div>
        </div>
      </div>
      <BottomTabs tabs={['Call Stack', 'Exception Settings', 'Immediate Window']} current="Immediate Window" />
    </section>
  )
}

// ---------------------------------------------------------------------------
// Auto-hide tab strips
// ---------------------------------------------------------------------------

function SideTab({ label, right }: { label: string; right?: boolean }) {
  return (
    <button
      type="button"
      className={`flex items-center leading-5 whitespace-nowrap text-[#d0d0d0] [writing-mode:vertical-rl] ${
        right ? 'border-r-8 pr-1.5' : 'border-l-8 pl-1'
      } border-[#3f3f46]`}
    >
      {label}
    </button>
  )
}

// ---------------------------------------------------------------------------
// Floating playback control
// ---------------------------------------------------------------------------

function DateSelect({ id, label, value }: { id: string; label: string; value: string }) {
  return (
    <div className="flex items-center gap-[9px]">
      <label htmlFor={id} className="pt-1">
        {label}
      </label>
      <span className="flex h-[26px] w-[110px] items-center bg-[#3f3f46] pr-1">
        <select id={id} className="min-w-0 flex-1 appearance-none bg-transparent pl-2 outline-none">
          <option>{value}</option>
        </select>
        <Icon className="size-3">
          <path d="m1 4 9 10 9-10" stroke="#d0d0d0" strokeWidth="4.500" />
        </Icon>
      </span>
    </div>
  )
}

function ReplayRadio({ label, checked }: { label: string; checked?: boolean }) {
  return (
    <label className="flex items-center gap-2">
      <input
        type="radio"
        name="source"
        defaultChecked={checked}
        className="size-[18px] appearance-none rounded-full bg-[radial-gradient(45%_32%_at_50%_25%,#e8e8e8,#3f3f46)] checked:bg-[radial-gradient(circle_at_50%_50%,#ffffff_34%,transparent_42%),radial-gradient(45%_32%_at_50%_25%,#e8e8e8,#3f3f46)]"
      />
      {label}
    </label>
  )
}

function Playback() {
  return (
    <aside className="absolute top-[166px] right-0 flex h-[169px] w-[409px] flex-col border border-r-0 border-[#3f3f46] bg-[#2f2f31] font-['Liberation_Sans',Arial,sans-serif] text-sm text-[#d0d0d0]">
      <div className="flex h-[31px] shrink-0 items-center justify-between border-b border-[#3f3f46] bg-[#1e1e1e] pr-[26px] pl-2">
        <h2 className="text-[19px]">Playback</h2>
        <time className="text-lg">8/3/2020 12:00:00 AM</time>
      </div>
      {/* Debugger adornment docked on the window's top edge */}
      <div className="absolute -top-px left-[140px] flex h-4 w-[130px] items-center justify-center border border-[#686868] bg-[#2d2d30]">
        <span className="h-1 w-[30px] border-y border-[#808080]" />
      </div>
      <div className="grid grid-cols-2 gap-y-2 pt-2 pl-2">
        <ReplayRadio label="Market Replay" checked />
        <ReplayRadio label="Historical" />
        <DateSelect id="start" label="Start" value="08/03/2020" />
        <DateSelect id="end" label="End" value="08/07/2020" />
      </div>
      <div className="mt-auto mb-2 flex items-center pl-[9px]">
        <button
          type="button"
          aria-label="Pause"
          className="flex size-[30px] shrink-0 items-center justify-center gap-0.5 rounded-full bg-linear-to-br from-[#7cc67c] to-[#0c860c]"
        >
          <span className="h-4 w-1 bg-[#e0e0e0]" />
          <span className="h-4 w-1 bg-[#e0e0e0]" />
        </button>
        <input
          type="range"
          aria-label="Playback position"
          defaultValue={0}
          className="ml-[9px] h-[22px] w-[275px] appearance-none bg-transparent [&::-webkit-slider-runnable-track]:h-[5px] [&::-webkit-slider-runnable-track]:bg-linear-to-b [&::-webkit-slider-runnable-track]:from-[#c0c0c0] [&::-webkit-slider-runnable-track]:to-[#6a6a6a] [&::-webkit-slider-thumb]:-mt-2 [&::-webkit-slider-thumb]:h-[22px] [&::-webkit-slider-thumb]:w-2.5 [&::-webkit-slider-thumb]:appearance-none [&::-webkit-slider-thumb]:border [&::-webkit-slider-thumb]:border-[#c0c0c0] [&::-webkit-slider-thumb]:bg-[#3f3f46]"
        />
        <span className="ml-[7px] flex h-[30px] w-[18px] flex-col items-center justify-center gap-2.5 bg-[#3f3f46]">
          <button type="button" aria-label="Faster">
            <Caret className="rotate-180 text-[#d0d0d0]" />
          </button>
          <button type="button" aria-label="Slower">
            <Caret className="text-[#d0d0d0]" />
          </button>
        </span>
        <span className="ml-2">1x</span>
      </div>
    </aside>
  )
}

// ---------------------------------------------------------------------------
// Status bar and the slice of the desktop taskbar under it
// ---------------------------------------------------------------------------

function StatusBar() {
  return (
    <footer className="shrink-0">
      <div className="flex h-[30px] items-center bg-[#ca5100] pl-[5px] text-white">
        <svg viewBox="0 0 20 14" className="h-3.5 w-5 shrink-0" fill="none" aria-hidden="true">
          <path d="M5 1h14l-4 12H1z" stroke="#f1f1f1" strokeWidth="1.500" />
        </svg>
        <span className="ml-2.5">Ready</span>
        <div className="ml-auto flex items-center">
          <button type="button" className="flex items-center gap-2.5">
            <Icon className="size-4">
              <path d="M10 18V4M4 10l6-7 6 7" stroke="#d8d8d8" strokeWidth="3.500" />
            </Icon>
            0
          </button>
          <button type="button" className="ml-[30px] flex items-center gap-2">
            <Icon className="size-4">
              <path d="m1 19 2-6L12 4l4 4-9 9zM13 3l2-2 4 4-2 2z" fill="#d8d8d8" />
            </Icon>
            14
          </button>
          <button type="button" className="ml-7 flex items-center gap-1.5">
            <Icon className="size-[18px]">
              <path d="m10 0 10 10-10 10L0 10z" fill="#d8d8d8" />
              <path d="M8 4v11M8 6l6 4" stroke="#ca5100" strokeWidth="1.600" />
              <circle cx="8" cy="14.500" r="1.800" fill="#ca5100" />
              <circle cx="13.500" cy="10" r="1.800" fill="#ca5100" />
            </Icon>
            jdt.nt8
          </button>
          <button type="button" className="ml-[30px] flex items-center gap-2">
            <Icon className="size-[18px]">
              <path d="M10 19v-6L4 5M10 13l6-8" stroke="#d8d8d8" strokeWidth="3.500" />
              <path d="M0 1h8L1 9zM20 1h-8l7 8z" fill="#d8d8d8" />
            </Icon>
            master
            <Caret className="rotate-180 text-white" />
          </button>
          <button type="button" aria-label="2 notifications" className="relative mr-[22px] ml-9 flex h-6 w-[25px] items-center">
            <Icon className="size-[18px]">
              <path d="M10 0c4 0 6 3 6 7 0 5 1 6 3 9H1c2-3 3-4 3-9 0-4 2-7 6-7zM7 17h6l-3 3z" fill="#d8d8d8" />
            </Icon>
            <span className="absolute right-0 bottom-0 flex size-4 items-center justify-center rounded-full bg-white text-xs text-black">
              2
            </span>
          </button>
        </div>
      </div>
      <div className="flex h-[9px] items-start overflow-hidden bg-[#1b1b1b]">
        <span className="ml-[124px] h-full w-[178px] bg-[#4b4b4b]" />
        <time className="mt-0.5 mr-[74px] ml-auto text-[13px]/5">10:15 PM</time>
        <span className="mr-1.5 h-full w-px bg-[#6a6a6a]" />
      </div>
    </footer>
  )
}

// ---------------------------------------------------------------------------
// App shell
// ---------------------------------------------------------------------------

export default function App() {
  return (
    <div className="relative flex h-screen flex-col overflow-hidden bg-[#2d2d30] font-['Open_Sans','Noto_Sans',sans-serif] text-sm text-[#f1f1f1]">
      <MenuBar />
      <Toolbar />
      <main className="mt-[15px] flex min-h-0 flex-1 pb-[7px]">
        <div className="flex w-10 shrink-0 flex-col items-start">
          <SideTab label="Live Visual Tree" />
        </div>
        <SpadePanel />
        <div className="ml-[9px] flex min-w-0 flex-1 flex-col gap-[7px]">
          <Editor />
          <div className="flex min-h-0 flex-1 gap-2">
            <WatchWindow />
            <ImmediateWindow />
          </div>
        </div>
        <div className="flex w-[39px] shrink-0 flex-col items-end gap-4">
          <SideTab label="Solution Explorer" right />
          <SideTab label="Live Property Explorer" right />
          <SideTab label="Properties" right />
        </div>
      </main>
      <StatusBar />
      <Playback />
    </div>
  )
}
